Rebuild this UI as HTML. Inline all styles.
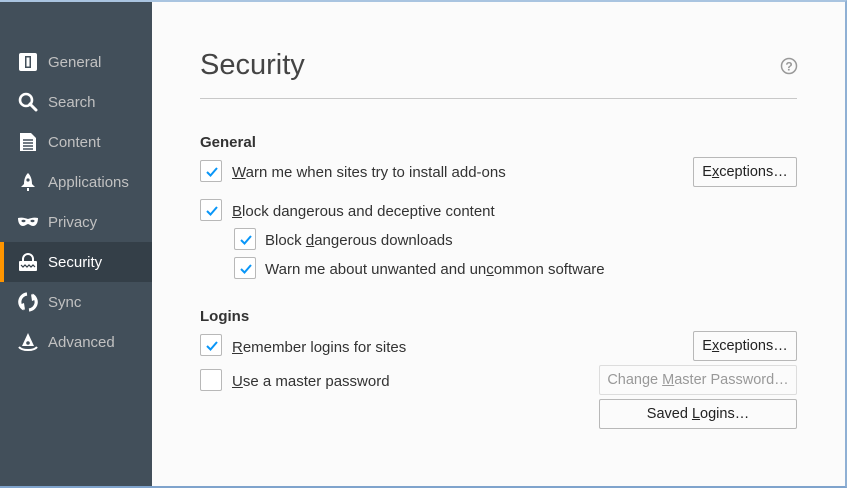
<!DOCTYPE html>
<html><head><meta charset="utf-8"><style>
*{margin:0;padding:0;box-sizing:border-box}
body{width:847px;height:488px;overflow:hidden;background:#fbfbfb;font-family:"Liberation Sans",sans-serif;position:relative;color:#333}
.frame{position:absolute;left:0;top:0;width:847px;height:488px;border-top:2px solid #a9c4e0;border-right:2px solid #8fb0d4;border-bottom:2px solid #7fa3cc}
.side{position:absolute;left:0;top:2px;width:152px;height:484px;background:#424f5a}
.item{position:absolute;left:0;width:152px;height:40px;color:#c1c1c1;font-size:15px;line-height:42px;padding-left:48px}
.item.sel{background:#343f48;color:#fff;border-left:4px solid #ff9500;padding-left:44px}
.item svg{position:absolute;left:18px;top:10px}
.item.sel svg{left:14px}
.t{position:absolute;font-size:15px;color:#333;white-space:nowrap;margin-top:1px}
.cb{position:absolute;width:22px;height:22px;border:1px solid #b8b8b8;background:#fff;border-radius:2px}
.cb svg{position:absolute;left:4px;top:4px}
.btn{position:absolute;height:30px;border:1px solid #b8b8b8;background:#fbfbfb;border-radius:2px;font-size:14.5px;text-align:center;line-height:29px;color:#222}
u{text-decoration:underline}
</style></head><body>
<div class="side">
 <div class="item" style="top:40px"><svg width="20" height="20"><rect x="1" y="1" width="18" height="18" rx="2" fill="#fff"/><rect x="7" y="4" width="6" height="12" fill="#424f5a"/><rect x="8.5" y="5.5" width="3" height="9" fill="#fff"/></svg>General</div>
 <div class="item" style="top:80px"><svg width="20" height="20"><circle cx="8" cy="8" r="6" fill="none" stroke="#fff" stroke-width="2.6"/><path d="M12 12l6 6" stroke="#fff" stroke-width="3" stroke-linecap="round"/></svg>Search</div>
 <div class="item" style="top:120px"><svg width="20" height="20"><path d="M2 1h11l5 5v13H2z" fill="#fff"/><path d="M5 8h10M5 11h10M5 14h10M5 17h10" stroke="#424f5a" stroke-width="1.4"/></svg>Content</div>
 <div class="item" style="top:160px"><svg width="20" height="20"><path d="M10 1c3 3 4 7 4 11l3 3H3l3-3c0-4 1-8 4-11z" fill="#fff"/><circle cx="10" cy="8" r="1.6" fill="#424f5a"/><path d="M10 16v3" stroke="#fff" stroke-width="2"/></svg>Applications</div>
 <div class="item" style="top:200px"><svg width="20" height="20"><path d="M0 6c4-1 7 0 10 1 3-1 6-2 10-1 0 5-2 8-5 8-2 0-4-2-5-2s-3 2-5 2C2 14 0 11 0 6z" fill="#fff"/><ellipse cx="5.5" cy="9" rx="2" ry="1.2" fill="#424f5a"/><ellipse cx="14.5" cy="9" rx="2" ry="1.2" fill="#424f5a"/></svg>Privacy</div>
 <div class="item sel" style="top:240px"><svg width="20" height="20"><path d="M5 9V7a5 5 0 0110 0v2" fill="none" stroke="#fff" stroke-width="2"/><rect x="1" y="9" width="18" height="10" rx="1" fill="#fff"/><path d="M3 13l2 2 2-2 2 2 2-2 2 2 2-2 2 2" stroke="#343f48" stroke-width="1.2" fill="none"/></svg>Security</div>
 <div class="item" style="top:280px"><svg width="20" height="20"><path d="M9 2a8 8 0 00-3 15M11 18a8 8 0 003-15" fill="none" stroke="#fff" stroke-width="3.2"/><path d="M1 13l6 5-1-7zM19 7l-6-5 1 7z" fill="#fff"/></svg>Sync</div>
 <div class="item" style="top:320px"><svg width="20" height="20"><path d="M10 1L4 14h12z" fill="#fff"/><path d="M1 15c3 4 15 4 18 0" fill="none" stroke="#fff" stroke-width="2"/><circle cx="10" cy="11" r="1.8" fill="#424f5a"/></svg>Advanced</div>
</div>

<div class="t" style="left:200px;top:48px;font-size:29px;color:#444">Security</div>
<svg style="position:absolute;left:780px;top:57px" width="18" height="18"><circle cx="9" cy="9" r="7.5" fill="none" stroke="#999" stroke-width="1.5"/><text x="9" y="13.5" font-size="12" text-anchor="middle" fill="#999" font-family="Liberation Sans" font-weight="bold">?</text></svg>
<div style="position:absolute;left:200px;top:98px;width:597px;height:1px;background:#c8c8c8"></div>

<div class="t" style="left:200px;top:133px;font-weight:bold">General</div>
<div class="cb" style="left:200px;top:160px"><svg width="14" height="14"><path d="M2 7l3.5 3.5L12 3" stroke="#0996f8" stroke-width="2" fill="none"/></svg></div>
<div class="t" style="left:232px;top:163px"><u>W</u>arn me when sites try to install add-ons</div>
<div class="btn" style="left:693px;top:157px;width:104px">E<u>x</u>ceptions…</div>
<div class="cb" style="left:200px;top:199px"><svg width="14" height="14"><path d="M2 7l3.5 3.5L12 3" stroke="#0996f8" stroke-width="2" fill="none"/></svg></div>
<div class="t" style="left:232px;top:202px"><u>B</u>lock dangerous and deceptive content</div>
<div class="cb" style="left:234px;top:228px"><svg width="14" height="14"><path d="M2 7l3.5 3.5L12 3" stroke="#0996f8" stroke-width="2" fill="none"/></svg></div>
<div class="t" style="left:265px;top:231px">Block <u>d</u>angerous downloads</div>
<div class="cb" style="left:234px;top:257px"><svg width="14" height="14"><path d="M2 7l3.5 3.5L12 3" stroke="#0996f8" stroke-width="2" fill="none"/></svg></div>
<div class="t" style="left:265px;top:260px">Warn me about unwanted and un<u>c</u>ommon software</div>

<div class="t" style="left:200px;top:307px;font-weight:bold">Logins</div>
<div class="cb" style="left:200px;top:334px"><svg width="14" height="14"><path d="M2 7l3.5 3.5L12 3" stroke="#0996f8" stroke-width="2" fill="none"/></svg></div>
<div class="t" style="left:232px;top:338px"><u>R</u>emember logins for sites</div>
<div class="btn" style="left:693px;top:331px;width:104px">E<u>x</u>ceptions…</div>
<div class="cb" style="left:200px;top:369px"></div>
<div class="t" style="left:232px;top:372px"><u>U</u>se a master password</div>
<div class="btn" style="left:599px;top:365px;width:198px;color:#999;border-color:#ddd">Change <u>M</u>aster Password…</div>
<div class="btn" style="left:599px;top:399px;width:198px">Saved <u>L</u>ogins…</div>
<div class="frame"></div>
</body></html>
